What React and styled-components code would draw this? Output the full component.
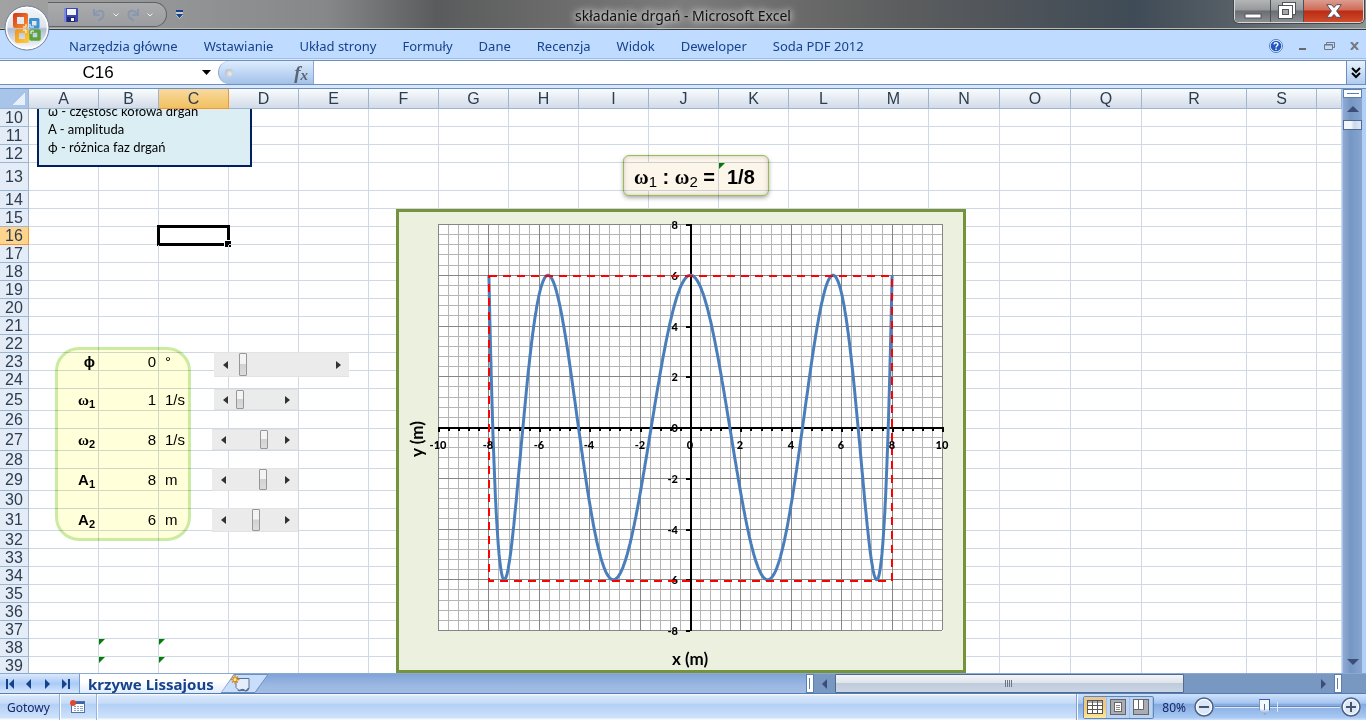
import React, { useState } from 'react';
import styled, { createGlobalStyle } from 'styled-components';

//STYLE
const GlobalStyle = createGlobalStyle`
  * { box-sizing: border-box; }
  body { margin: 0; overflow: hidden; }
  button { padding: 0; border: 0; background: none; font: inherit; color: inherit; display: flex; align-items: center; justify-content: center; }
  input { padding: 0; border: 0; outline: 0; min-width: 0; }
  svg { display: block; }
`;

const ui = `"Noto Sans", "Open Sans", sans-serif`;
const sheetFont = `"Liberation Sans", Arial, sans-serif`;
const chartFont = `Lato, "Noto Sans", sans-serif`;

const Window = styled.div`height: 100vh; display: flex; flex-direction: column; position: relative; background: #bfdbff; font-family: ${ui}; font-size: 12px;`;

const TitleBar = styled.header`
  flex: none; height: 30px; display: grid; grid-template-columns: 1fr auto 1fr; align-items: start;
  border-bottom: 1px solid #33383c; box-shadow: inset 0 -1px #b9bcb9;
  background: linear-gradient(90deg, #a2a2a2 0, #929394 14%, #858789 24%, #5a5b5c 32%, #6a6a6a 40%, #7b7b7b 50%, #6b6b6b 58%, #5c5d5e 66%, #4b5259 76%, #3f4b56 83%, #565f66 90%, #8d9494 100%);
`;
const Title = styled.h1`margin: 0; font-size: 14px; font-weight: 400; line-height: 32px; color: #111; text-shadow: 0 0 6px #ddd, 0 0 8px #ccc, 0 0 10px #ccc;`;
const QuickAccess = styled.div`
  display: flex; align-items: center; gap: 9px; margin-left: 48px; padding-top: 2px;
`;
const QuickGroup = styled.div`
  display: flex; align-items: center; width: 119px; height: 25px; padding-left: 16px; gap: 7px;
  border: 1px solid #5f6163; border-left: 0; border-radius: 0 13px 13px 0; background: linear-gradient(#a9abad, #9b9da0);
`;
const WindowButtons = styled.div`
  justify-self: end; display: flex; height: 23px; margin-right: 2px; overflow: hidden;
  border: 1px solid #d5d7d8; border-top: 0; border-radius: 0 0 5px 5px; box-shadow: 0 0 0 1px #44484c;
`;
const WindowButton = styled.button`
  width: ${p => p.$width}px; height: 22px; border-right: 1px solid #4c5054;
  background: ${p => p.$close ? 'linear-gradient(#dc9c8e 0, #cf6c58 45%, #bb2c12 50%, #cf4c2c 100%)' : 'linear-gradient(#b3b5b7 0, #96999b 45%, #6a6e72 50%, #8a8e90 100%)'};
  &:last-child { border-right: 0; }
`;
const OfficeButton = styled.button`position: absolute; left: 4px; top: 4px; z-index: 2;`;

const Ribbon = styled.nav`
  flex: none; height: 31px; display: flex; align-items: center; padding: 2px 7px 0 56px;
  border-bottom: 1px solid #6a8fc0; box-shadow: inset 0 -1px #dbe9fb, inset 0 -2px #9dbfe8;
`;
const RibbonTab = styled.a`padding: 0 13px; font-size: 13px; line-height: 26px; color: #15428b; text-decoration: none; white-space: nowrap;`;
const RibbonTools = styled.div`margin-left: auto; display: flex; align-items: center; gap: 15px;`;

const FormulaBar = styled.div`
  flex: none; height: 28px; display: flex; background: #fff; border-bottom: 1px solid #6a8fc0;
  box-shadow: inset 0 -3px #d9e7fa, inset 0 -4px #6a8fc0; padding-bottom: 4px;
`;
const NameBox = styled.input`width: 196px; text-align: center; font-family: ${sheetFont}; font-size: 17px; background: none;`;
const NameArrow = styled.button`width: 20px;`;
const FunctionButton = styled.button`
  width: 96px; margin-left: 2px; padding: 0 5px 0 6px; justify-content: space-between; border: 1px solid #8aa8cf;
  border-width: 0 1px 0 1px; border-radius: 12px 0 0 12px; background: linear-gradient(#dfecfb, #b9d3f3 60%, #a3c0e6);
  font-family: "Liberation Serif", serif; font-style: italic; font-size: 19px; line-height: 20px; font-weight: 700; color: #5b6470;
  sub { font-size: 15px; line-height: 0; vertical-align: -1px; }
`;
const Dot = styled.i`width: 8px; height: 8px; border-radius: 50%; background: radial-gradient(circle at 60% 60%, #eee, #a5adb8);`;
const FormulaInput = styled.input`flex: 1; font-family: ${sheetFont}; font-size: 15px; background: none;`;
const ExpandButton = styled.button`width: 20px; border: 1px solid #6a8fc0; border-width: 0 1px; background: linear-gradient(#e8f1fc, #aecbf0);`;

const Workspace = styled.main`flex: 1; min-height: 0; display: flex;`;
const Sheet = styled.div`flex: 1; min-width: 0; position: relative; overflow: hidden; background: #fff;`;
const Grid = styled.table`
  width: 100%; table-layout: fixed; border-collapse: separate; border-spacing: 0;
  font-family: ${sheetFont}; font-size: 15px; line-height: 16px; color: #000;
`;
const ColumnHead = styled.th`
  height: 20px; padding: 0; font-weight: 400; font-size: 16px; color: #2b3d4f;
  border-right: 1px solid ${p => p.$active ? '#f29536' : '#9eb6ce'}; border-bottom: 1px solid ${p => p.$active ? '#f29536' : '#9eb6ce'};
  background: ${p => p.$active ? 'linear-gradient(#f9d99f, #f1c15f)' : 'linear-gradient(#f9fcfd, #d3dbe9)'};
`;
const Corner = styled.th`
  padding: 0; border-right: 1px solid #9eb6ce; border-bottom: 1px solid #9eb6ce;
  background: linear-gradient(135deg, transparent 50%, #e8eff9 50%) 12px 4px / 13px 12px no-repeat, #a9c4e9;
`;
const RowHead = styled.th`
  padding: 0; font-weight: 400; font-size: 16px; color: #2b3d4f; text-align: center;
  border-right: 1px solid ${p => p.$active ? '#f29536' : '#9eb6ce'}; border-bottom: 1px solid ${p => p.$active ? '#f29536' : '#9eb6ce'};
  background: ${p => p.$active ? '#ffd58d' : '#e4ecf7'};
`;
const Cell = styled.td`
  position: relative; height: ${p => p.$height}px; padding: 0 ${p => p.$end || 0}px 0 ${p => p.$start || 0}px; white-space: nowrap;
  border-right: 1px solid #d0d7e5; border-bottom: 1px solid #d0d7e5;
  text-align: ${p => p.$align || 'left'}; font-weight: ${p => p.$bold ? 700 : 400}; font-size: ${p => p.$big ? 20 : 15}px;
  sub { font-size: ${p => p.$big ? 15 : 11}px; line-height: 0; vertical-align: -3px; font-weight: ${p => p.$big ? 400 : 700}; }
`;
const Flag = styled.i`position: absolute; left: 0; top: 0; border: solid transparent; border-width: 0 6px 6px 0; border-left: 0; border-top: 6px solid #008000; border-bottom: 0;`;
const Selection = styled.i`
  position: absolute; inset: -2px; border: 3px solid #000;
  &::after { content: ''; position: absolute; right: -4px; bottom: -4px; width: 6px; height: 6px; background: #000; border: solid #fff; border-width: 1px 0 0 1px; }
`;
const Omega = styled.span`font-family: "Liberation Serif", serif; font-size: ${p => p.$size}px; line-height: 0;`;

// floating objects lie over the cells but never over the column heads
const Objects = styled.div`position: absolute; inset: 20px 0 0 0; overflow: hidden; pointer-events: none; & > * { pointer-events: auto; }`;
const Note = styled.div`
  position: absolute; left: 37px; top: -31px; width: 215px; height: 89px; padding: 22px 9px 0;
  border: 2px solid #002060; background: #dbeef3; font-family: ${chartFont}; font-size: 13px; line-height: 18px;
  p { margin: 0; }
`;
const RatioFrame = styled.div`
  position: absolute; left: 623px; top: 46px; width: 146px; height: 41px; border: 1px solid #9bbb59; border-radius: 6px;
  background: #fbf5ea; mix-blend-mode: multiply; box-shadow: 0 2px 4px #aaa, inset 0 0 4px #cfc8bd;
`;
const ParamFrame = styled.div`
  position: absolute; left: 55px; top: 238px; width: 136px; height: 194px; border: 3px solid #cbeaa2; border-radius: 24px;
  background: #ffffd9; mix-blend-mode: multiply;
`;
const Spinner = styled.div`
  position: absolute; left: ${p => p.$left}px; top: ${p => p.$top}px; width: ${p => p.$width}px; height: ${p => p.$height}px;
  display: flex; background: #ebebeb; border: 1px solid #e3e3e3; border-width: 1px 0;
  button { width: 22px; }
  input {
    flex: 1; appearance: none; background: none; margin: 0; height: 100%;
    &::-webkit-slider-thumb { appearance: none; width: 8px; height: ${p => p.$height - 2}px; border: 1px solid #979797; border-radius: 1px; background: linear-gradient(#f4f4f4 45%, #d2d2d6 50%, #dcdcde); }
  }
`;
const ChartFrame = styled.figure`position: absolute; left: 396px; top: 100px; margin: 0; border: 3px solid #76933c; background: #ebf0df;`;

const VScroll = styled.div`
  flex: none; width: 24px; display: flex; flex-direction: column; align-items: center; justify-content: space-between;
  border-left: 1px solid #a9c6ec; border-right: 4px solid #b1cef5; background: linear-gradient(90deg, #8fabd3, #7697c4 40%, #86a5d0);
  padding-bottom: 8px;
`;
const VTop = styled.div`width: 100%; display: flex; flex-direction: column; align-items: center; gap: 8px;`;
const VSplit = styled.div`width: 100%; height: 9px; border: 1px solid #5c7fae; background: linear-gradient(#5c7fae, #5c7fae) 3px 3px / 12px 1px no-repeat, #fff;`;
const VThumb = styled.div`width: 100%; height: 10px; border: 1px solid #4f6a93; background: linear-gradient(90deg, #f2f6fb 40%, #c9d8ec 60%, #dfe9f6);`;

const TabStrip = styled.div`
  flex: none; height: 20px; display: flex; border-top: 1px solid #8aa9d3; background: linear-gradient(#7fa3d8, #9cb8e2 60%, #a2bce3);
`;
const TabNav = styled.div`display: flex; width: 79px; padding: 0 4px 0 1px; background: linear-gradient(#dbe8fa, #a9cbf7 50%, #d7e6fb); button { flex: 1; }`;
const SheetTab = styled.a`
  position: relative; padding: 0 20px 0 8px; background: linear-gradient(#fff 40%, #dfecff); border-left: 1px solid #7c9cc8;
  clip-path: polygon(0 0, 100% 0, calc(100% - 13px) 100%, 0 100%);
  font-size: 15px; font-weight: 700; line-height: 20px; color: #15428b; text-decoration: none;
`;
const NewSheet = styled.button`margin-left: -13px;`;
const HSide = styled.div`margin-left: auto; width: 41%; display: flex; align-items: stretch; background: #7898c2; padding-right: 24px;`;
const HSplit = styled.div`width: 8px; border: 1px solid #5c7fae; background: linear-gradient(#5c7fae, #5c7fae) 2px 3px / 1px 11px no-repeat, #fff;`;
const HArrow = styled.button`width: 21px;`;
const HTrack = styled.div`flex: 1; display: flex;`;
const HThumb = styled.div`
  width: 73%; display: flex; align-items: center; justify-content: center; border: 1px solid #4f6a93; border-radius: 1px;
  background: linear-gradient(#f2f4f8 0, #e0e5ec 45%, #c0cbda 50%, #c9d5e6 100%);
`;

const StatusBar = styled.footer`
  flex: none; height: 27px; display: flex; align-items: stretch; border-top: 1px solid #567db1; color: #15286b; line-height: 27px;
  background: linear-gradient(#fff 0, #d7e6f9 8%, #c7dcf8 35%, #b3d0f5 40%, #cde1fb 90%, #fff 100%);
`;
const StatusText = styled.span`padding: 0 9px 0 7px; font-size: 12px;`;
const StatusIcon = styled.button`width: 38px; border: 1px solid #95b5e0; border-width: 0 1px; box-shadow: 1px 0 #fff, inset 1px 0 #fff;`;
const StatusRight = styled.div`
  margin-left: auto; display: flex; align-items: center; gap: 8px; padding: 0 5px 0 6px; border-left: 1px solid #7ea2d3; box-shadow: inset 1px 0 #fff;
  background: linear-gradient(#cfe2fb 0, #a5c6f2 35%, #86abe0 40%, #a6c8f3 90%, #cfe2fb 100%);
`;
const ViewButtons = styled.div`display: flex; height: 23px; border: 1px solid #5f87b8; border-radius: 2px;`;
const ViewButton = styled.button`width: 23px; background: ${p => p.$active ? 'linear-gradient(#e8c79a, #f3c878 50%, #ffe89a)' : '#bcd4f4'}; border-right: 1px solid #a3c0e6;`;
const ZoomSlider = styled.div`
  display: flex; align-items: center;
  input {
    width: 125px; height: 16px; margin: 0 1px; appearance: none;
    background: linear-gradient(#dde9f8, #dde9f8) 62px 3px / 1px 10px no-repeat, linear-gradient(#dde9f8, #dde9f8) 0 8px / 100% 1px no-repeat, linear-gradient(#6788b8, #6788b8) 0 7px / 100% 1px no-repeat;
    &::-webkit-slider-thumb {
      appearance: none; width: 11px; height: 16px; clip-path: polygon(0 0, 100% 0, 100% 65%, 50% 100%, 0 65%);
      background: linear-gradient(#4a6fa5, #4a6fa5) 5px 5px / 1px 6px no-repeat, linear-gradient(90deg, #38609b 1px, transparent 1px calc(100% - 1px), #38609b calc(100% - 1px)), linear-gradient(#38609b 1px, #f5f9ff 1px 60%, #7593c0);
    }
  }
`;

const columns = [
  ['A', 70], ['B', 60], ['C', 70], ['D', 70], ['E', 70], ['F', 70], ['G', 70], ['H', 70], ['I', 70], ['J', 70],
  ['K', 70], ['L', 70], ['M', 70], ['N', 71], ['O', 71], ['Q', 71], ['R', 105], ['S', 70], ['', null],
];
const heights = { 13: 28, 25: 22, 27: 22, 29: 22, 31: 22 };
const rows = Array.from({ length: 30 }, (_, i) => i + 10);

const param = (label, value, unit) => ({
  A: { text: label, align: 'right', bold: true, end: 3 },
  B: { text: value, align: 'right', end: 2 },
  C: { text: unit, start: 6 },
});
const omega = (n) => <><Omega $size={15}>ω</Omega><sub>{n}</sub></>;

const cells = {
  13: {
    I: { text: <><Omega $size={20}>ω</Omega><sub>1</sub> : <Omega $size={20}>ω</Omega><sub>2</sub> =</>, span: 2, align: 'right', bold: true, big: true, end: 3 },
    K: { text: '1/8', bold: true, big: true, start: 8, flag: true },
  },
  16: { C: { selected: true } },
  23: param('ϕ', '0', '°'),
  25: param(omega(1), '1', '1/s'),
  27: param(omega(2), '8', '1/s'),
  29: param(<>A<sub>1</sub></>, '8', 'm'),
  31: param(<>A<sub>2</sub></>, '6', 'm'),
  38: { B: { flag: true }, C: { flag: true } },
  39: { B: { flag: true }, C: { flag: true } },
};

const spinners = [
  { name: 'Różnica faz', left: 214, top: 243, width: 135, height: 25, max: 83, value: 3 },
  { name: 'Częstość 1', left: 214, top: 280, width: 84, height: 21, max: 32, value: 0 },
  { name: 'Częstość 2', left: 212, top: 320, width: 86, height: 21, max: 34, value: 26 },
  { name: 'Amplituda 1', left: 212, top: 359, width: 86, height: 23, max: 34, value: 25 },
  { name: 'Amplituda 2', left: 212, top: 399, width: 86, height: 24, max: 34, value: 18 },
];

const ribbonTabs = ['Narzędzia główne', 'Wstawianie', 'Układ strony', 'Formuły', 'Dane', 'Recenzja', 'Widok', 'Deweloper', 'Soda PDF 2012'];

const arrowPaths = {
  left: ['0 5 5 0 5 10', 5, 10],
  right: ['5 5 0 0 0 10', 5, 10],
  smallLeft: ['0 4 5 0 5 8', 5, 8],
  smallRight: ['5 4 0 0 0 8', 5, 8],
  up: ['6 0 12 6 0 6', 12, 6],
  down: ['6 6 12 0 0 0', 12, 6],
};

function Arrow({ dir, color = '#333', bar }) {
  const [points, w, h] = arrowPaths[dir];
  return (
    <svg width={bar ? w + 3 : w} height={h} viewBox={`${bar === 'before' ? -3 : 0} 0 ${bar ? w + 3 : w} ${h}`}>
      <polygon points={points} fill={color} />
      {bar && <rect x={bar === 'before' ? -3 : 6} width="2" height="10" fill={color} />}
    </svg>
  )
}

function OfficeLogo() {
  return (
    <svg width="47" height="47" viewBox="0 0 47 47">
      <defs>
        <linearGradient id="orb" x1="0" y1="0" x2="0" y2="1">
          <stop offset="0" stopColor="#f7f8fa" /><stop offset=".48" stopColor="#dde2ea" /><stop offset=".52" stopColor="#aebdd4" /><stop offset="1" stopColor="#fff" />
        </linearGradient>
        <linearGradient id="red" x1="0" y1="0" x2="1" y2="1"><stop offset="0" stopColor="#d8401c" /><stop offset="1" stopColor="#f58a2c" /></linearGradient>
        <linearGradient id="yellow" x1="0" y1="0" x2="1" y2="1"><stop offset="0" stopColor="#f39a1c" /><stop offset="1" stopColor="#fcc733" /></linearGradient>
      </defs>
      <circle cx="23" cy="24" r="22" fill="url(#orb)" stroke="#6c7f9b" />
      <circle cx="23" cy="24" r="20.500" fill="none" stroke="#fff" strokeWidth="1.500" />
      <g fill="none" strokeLinejoin="round">
        <rect x="11" y="11" width="11" height="11" stroke="url(#red)" strokeWidth="4" />
        <rect x="26.500" y="15.500" width="7.500" height="7.500" stroke="#3f92cf" strokeWidth="3" />
        <rect x="13" y="27" width="10" height="10" stroke="url(#yellow)" strokeWidth="4" />
        <rect x="27" y="27" width="8" height="8" stroke="#5aa33b" strokeWidth="3.500" />
        <path d="M22 20v3h-3M26 20v3h4M22 29v-3h-3M27 30v-3h3" stroke="#fff" />
      </g>
    </svg>
  )
}

const Curl = ({ flip }) => (
  <svg width="14" height="14" viewBox="0 0 14 14" transform={flip ? 'scale(-1 1)' : undefined}>
    <path d="M2 1v6h6M2.500 6.500C5 2 11 1.500 11.500 6c.3 3-2 5-5 6.500" fill="none" stroke="#8494b0" strokeWidth="2" opacity=".8" />
  </svg>
)
const Chevron = () => <svg width="6" height="4" viewBox="0 0 6 4"><path d="M.5.5 3 3 5.500.5" fill="none" stroke="#f0f0f0" /></svg>;

function TopBar() {
  return (
    <TitleBar>
      <QuickAccess>
        <QuickGroup>
          <button aria-label="Zapisz">
            <svg width="14" height="14" viewBox="0 0 14 14">
              <rect width="14" height="14" rx="1" fill="#3b46b5" /><rect x="3" y="1" width="9" height="6" fill="#f2f5fd" />
              <rect x="3" y="9" width="8" height="5" fill="#24286f" /><rect x="7" y="10" width="3" height="3" fill="#fff" /><rect width="2" height="14" fill="#7d88e0" />
            </svg>
          </button>
          <span />
          <button aria-label="Cofnij"><Curl /></button>
          <button aria-label="Lista cofania"><Chevron /></button>
          <button aria-label="Wykonaj ponownie"><Curl flip /></button>
          <button aria-label="Lista ponawiania"><Chevron /></button>
        </QuickGroup>
        <button aria-label="Dostosuj pasek">
          <svg width="7" height="9" viewBox="0 0 7 9"><path d="M0 1h7" stroke="#15428b" strokeWidth="2" /><path d="M0 3h7" stroke="#fff" /><path d="M0 4h7L3.500 8z" fill="#15428b" /><path d="m0 5 3.500 3.500L7 5" fill="none" stroke="#dfe6f2" strokeWidth=".6" /></svg>
        </button>
      </QuickAccess>
      <Title>składanie drgań - Microsoft Excel</Title>
      <WindowButtons>
        <WindowButton $width={36} aria-label="Minimalizuj">
          <svg width="18" height="18" viewBox="0 0 18 18"><rect x="1" y="12" width="16" height="4" fill="#fff" stroke="#50555c" /></svg>
        </WindowButton>
        <WindowButton $width={33} aria-label="Przywróć">
          <svg width="18" height="18" viewBox="0 0 18 18">
            <rect x="4.500" y=".5" width="13" height="12" fill="#fff" stroke="#50555c" />
            <rect x=".5" y="3.500" width="14" height="13" fill="#fff" stroke="#50555c" />
            <rect x="4.500" y="7.500" width="6" height="5" fill="#a5a8ab" stroke="#50555c" />
          </svg>
        </WindowButton>
        <WindowButton $width={59} $close aria-label="Zamknij">
          <svg width="16" height="14" viewBox="0 0 16 14"><path d="M.7.700h4.800L8 3.600 10.500.7h4.800L10.600 7l4.700 6.300h-4.800L8 10.400l-2.500 2.900H.7L5.400 7z" fill="#fff" stroke="#4e4f60" /></svg>
        </WindowButton>
      </WindowButtons>
    </TitleBar>
  )
}

function RibbonBar() {
  return (
    <Ribbon>
      {ribbonTabs.map(tab => <RibbonTab href="#" key={tab}>{tab}</RibbonTab>)}
      <RibbonTools>
        <button aria-label="Pomoc">
          <svg width="14" height="14" viewBox="0 0 14 14">
            <circle cx="7" cy="7" r="6.500" fill="#fff" stroke="#4a7cc8" /><circle cx="7" cy="7" r="5.300" fill="#1f57c3" />
            <path d="M5 5.500C5.200 3.200 9 3.300 8.900 5.400 8.800 6.700 7 6.800 7 8.500M7 9.500v1.500" fill="none" stroke="#fff" strokeWidth="1.400" />
          </svg>
        </button>
        <button aria-label="Minimalizuj skoroszyt"><svg width="11" height="10" viewBox="0 0 11 10"><path d="M1 8h7" stroke="#66696e" strokeWidth="2" /></svg></button>
        <button aria-label="Przywróć skoroszyt">
          <svg width="11" height="8" viewBox="0 0 11 8"><path d="M2.500 2.500v-2h8v5h-2M.5 2.500h8v5h-8zM.5 3h8" fill="none" stroke="#75797f" /></svg>
        </button>
        <button aria-label="Zamknij skoroszyt"><svg width="9" height="8" viewBox="0 0 9 8"><path d="m1 0 7 8M8 0 1 8" stroke="#75797f" strokeWidth="2" /></svg></button>
      </RibbonTools>
    </Ribbon>
  )
}

function FormulaRow() {
  const [formula, setFormula] = useState('');
  return (
    <FormulaBar>
      <NameBox aria-label="Pole nazwy" defaultValue="C16" />
      <NameArrow aria-label="Lista nazw"><svg width="9" height="5" viewBox="0 0 9 5"><path d="M0 0h9L4.500 5z" fill="#000" /></svg></NameArrow>
      <FunctionButton aria-label="Wstaw funkcję"><Dot /><span>f<sub>x</sub></span></FunctionButton>
      <FormulaInput aria-label="Pasek formuły" value={formula} onChange={e => setFormula(e.target.value)} />
      <ExpandButton aria-label="Rozwiń pasek formuły">
        <svg width="10" height="12" viewBox="0 0 10 12"><path d="m1 1 4 4 4-4M1 6l4 4 4-4" fill="none" stroke="#000" strokeWidth="2" /></svg>
      </ExpandButton>
    </FormulaBar>
  )
}

function SheetRow({ row }) {
  const data = cells[row] || {};
  const height = heights[row] || 18;
  const visible = columns.filter(([name], i) => !(i > 0 && data[columns[i - 1][0]]?.span));
  return (
    <tr>
      <RowHead scope="row" $active={row === 16}>{row}</RowHead>
      {visible.map(([name]) => {
        const c = data[name] || {};
        return (
          <Cell key={name} $height={height} colSpan={c.span} $align={c.align} $bold={c.bold} $big={c.big} $start={c.start} $end={c.end}>
            {c.text}
            {c.flag && <Flag />}
            {c.selected && <Selection />}
          </Cell>
        )
      })}
    </tr>
  )
}

// plot area inside the chart frame
const plot = { x: 39, y: 12, w: 504, h: 406 };
const px = x => plot.x + (x + 10) * plot.w / 20;
const py = y => plot.y + (8 - y) * plot.h / 16;
const snap = v => Math.round(v) + 0.5;
const range = (from, to, step) => Array.from({ length: Math.round((to - from) / step) + 1 }, (_, i) => from + i * step);

const curve = range(0, 720, 1).map(i => {
  const t = Math.PI * i / 720;
  return `${(px(8 * Math.cos(t)) + 0.5).toFixed(1)},${(py(6 * Math.cos(8 * t)) + 0.5).toFixed(1)}`;
}).join(' ');

function Chart() {
  const minor = { stroke: '#b5b5b5' };
  const major = { stroke: '#868686' };
  return (
    <ChartFrame>
      <svg width="564" height="458" viewBox="0 0 564 458" fontFamily={chartFont} fontWeight="900" fontSize="11" role="img" aria-label="krzywa Lissajous">
        <rect x={plot.x} y={plot.y} width={plot.w + 1} height={plot.h + 1} fill="#fff" />
        <g {...minor}>
          {range(-10, 10, 0.4).map(x => <line key={x} x1={snap(px(x))} x2={snap(px(x))} y1={plot.y} y2={plot.y + plot.h} />)}
          {range(-8, 8, 0.4).map(y => <line key={y} y1={snap(py(y))} y2={snap(py(y))} x1={plot.x} x2={plot.x + plot.w} />)}
        </g>
        <g {...major}>
          {range(-10, 10, 2).map(x => <line key={x} x1={snap(px(x))} x2={snap(px(x))} y1={plot.y} y2={plot.y + plot.h} />)}
          {range(-8, 8, 2).map(y => <line key={y} y1={snap(py(y))} y2={snap(py(y))} x1={plot.x} x2={plot.x + plot.w} />)}
        </g>
        <g stroke="#000" strokeWidth="2">
          <line x1={px(0) + 1} x2={px(0) + 1} y1={plot.y} y2={plot.y + plot.h + 1} />
          <line y1={py(0) + 1} y2={py(0) + 1} x1={plot.x} x2={plot.x + plot.w + 1} />
          {range(-10, 10, 0.4).map(x => <line key={x} x1={Math.round(px(x)) + 1} x2={Math.round(px(x)) + 1} y1={py(0)} y2={py(0) + 4} />)}
          {range(-10, 10, 2).map(x => <line key={x} x1={Math.round(px(x)) + 1} x2={Math.round(px(x)) + 1} y1={py(0)} y2={py(0) + 5} />)}
          {range(-8, 8, 2).map(y => <line key={y} y1={Math.round(py(y)) + 1} y2={Math.round(py(y)) + 1} x1={px(0) - 4} x2={px(0)} />)}
        </g>
        <g textAnchor="end">
          {range(-8, 8, 2).map(y => <text key={y} x={px(0) - 12} y={Math.round(py(y)) + 5}>{y}</text>)}
        </g>
        <polyline points={curve} fill="none" stroke="#4a7ebb" strokeWidth="3" strokeLinejoin="round" />
        <rect x={Math.round(px(-8)) + 1} y={Math.round(py(6)) + 1} width={Math.round(px(8) - px(-8))} height={Math.round(py(-6) - py(6))} fill="none" stroke="#f00" strokeWidth="2" strokeDasharray="8 6" />
        <g textAnchor="middle">
          {range(-10, 10, 2).map(x => <text key={x} x={Math.round(px(x))} y={py(0) + 22}>{x}</text>)}
        </g>
        <g textAnchor="middle" fontSize="17" fontWeight="700">
          <text x={px(0)} y="453">x (m)</text>
          <text transform="translate(24 227) rotate(-90)">y (m)</text>
        </g>
      </svg>
    </ChartFrame>
  )
}

function Spreadsheet() {
  return (
    <Sheet>
      <Grid>
        <colgroup>
          <col style={{ width: 29 }} />
          {columns.map(([name, width]) => <col key={name} style={width ? { width } : undefined} />)}
        </colgroup>
        <thead>
          <tr>
            <Corner />
            {columns.map(([name]) => <ColumnHead scope="col" key={name} $active={name === 'C'}>{name}</ColumnHead>)}
          </tr>
        </thead>
        <tbody>
          {rows.map(row => <SheetRow row={row} key={row} />)}
        </tbody>
      </Grid>
      <Objects>
        <Note>
          <p>ω - częstość kołowa drgań</p>
          <p>A - amplituda</p>
          <p>ϕ - różnica faz drgań</p>
        </Note>
        <RatioFrame />
        <ParamFrame />
        {spinners.map(s => (
          <Spinner key={s.name} $left={s.left} $top={s.top} $width={s.width} $height={s.height}>
            <button aria-label="Mniej"><Arrow dir="smallLeft" /></button>
            <input type="range" aria-label={s.name} min="0" max={s.max} defaultValue={s.value} />
            <button aria-label="Więcej"><Arrow dir="smallRight" /></button>
          </Spinner>
        ))}
        <Chart />
      </Objects>
    </Sheet>
  )
}

function BottomTabs() {
  return (
    <TabStrip>
      <TabNav>
        <button aria-label="Pierwszy arkusz"><Arrow dir="left" color="#15428b" bar="before" /></button>
        <button aria-label="Poprzedni arkusz"><Arrow dir="left" color="#15428b" /></button>
        <button aria-label="Następny arkusz"><Arrow dir="right" color="#15428b" /></button>
        <button aria-label="Ostatni arkusz"><Arrow dir="right" color="#15428b" bar="after" /></button>
      </TabNav>
      <SheetTab href="#">krzywe Lissajous</SheetTab>
      <NewSheet aria-label="Wstaw arkusz">
        <svg width="48" height="19" viewBox="0 0 48 19">
          <path d="M0 18.500 13 .5h34L34 18.500z" fill="#c9defa" stroke="#6a8fc0" />
          <path d="M15 4.500h13v9l-3 3h-7l-3-3z" fill="#e4edfa" stroke="#5a6f96" />
          <path d="M17 16c2 2 4-2 6 0s4 0 5-2" fill="none" stroke="#5a6f96" strokeWidth="1.500" />
          <path d="M14 1v9M9.500 5.500h9M11 2.500l6 6M17 2.500l-6 6" stroke="#d98a1c" strokeWidth="1.300" /><circle cx="14" cy="5.500" r="1.500" fill="#fff3a8" />
        </svg>
      </NewSheet>
      <HSide>
        <HSplit />
        <HArrow aria-label="Przewiń w lewo"><Arrow dir="left" color="#3c4d78" /></HArrow>
        <HTrack>
          <HThumb><svg width="8" height="7" viewBox="0 0 8 7"><path d="M.5 0v7M2.500 0v7M4.500 0v7M6.500 0v7" stroke="#6b7688" /></svg></HThumb>
        </HTrack>
        <HArrow aria-label="Przewiń w prawo"><Arrow dir="right" color="#3c4d78" /></HArrow>
        <HSplit />
      </HSide>
    </TabStrip>
  )
}

const RoundSign = ({ plus }) => (
  <svg width="20" height="20" viewBox="0 0 20 20">
    <circle cx="10" cy="10" r="9" fill="#dce8f8" stroke="#4f6384" strokeWidth="1.500" /><circle cx="10" cy="10" r="7.500" fill="none" stroke="#fff" />
    <path d={plus ? 'M5 10h10M10 5v10' : 'M5 10h10'} stroke="#46546c" strokeWidth="2" />
  </svg>
)

function Status() {
  return (
    <StatusBar>
      <StatusText>Gotowy</StatusText>
      <StatusIcon aria-label="Zarejestruj makro">
        <svg width="16" height="14" viewBox="0 0 16 14">
          <rect x="1.500" y="1.500" width="13" height="11" fill="#fff" stroke="#53709c" /><rect x="2" y="2" width="12" height="2" fill="#3f62a8" />
          <path d="M4 6.500h2M7 6.500h2M10 6.500h3M4 8.500h2M7 8.500h2M10 8.500h3M4 10.500h2M7 10.500h2M10 10.500h3" stroke="#8ba3c8" />
          <circle cx="3" cy="3" r="3" fill="#e2492c" />
        </svg>
      </StatusIcon>
      <StatusRight>
        <ViewButtons>
          <ViewButton $active aria-label="Normalny">
            <svg width="16" height="14" viewBox="0 0 16 14"><rect x=".5" y=".5" width="15" height="13" fill="#fff" stroke="#555" /><path d="M0 2h16M0 5.500h16M0 9.500h16M5.500 1v13M10.500 1v13" stroke="#555" /></svg>
          </ViewButton>
          <ViewButton aria-label="Układ strony">
            <svg width="16" height="16" viewBox="0 0 16 16"><rect x=".5" y=".5" width="15" height="15" fill="#a9adb3" stroke="#666" /><rect x="4.500" y="3.500" width="7" height="9" fill="#fff" stroke="#666" /><path d="M6 6.500h4M6 8.500h4M6 10.500h4" stroke="#888" /></svg>
          </ViewButton>
          <ViewButton aria-label="Podgląd podziału stron">
            <svg width="16" height="16" viewBox="0 0 16 16"><rect x=".5" y=".5" width="15" height="15" fill="#a9adb3" stroke="#666" /><path d="M1 1h4v9H1zM6 1h4v9H6z" fill="#fff" /><path d="M5.500 0v10M10.500 0v10.500H0" fill="none" stroke="#666" /></svg>
          </ViewButton>
        </ViewButtons>
        <span>80%</span>
        <ZoomSlider>
          <button aria-label="Pomniejsz"><RoundSign /></button>
          <input type="range" aria-label="Powiększenie" min="0" max="100" defaultValue="39" />
          <button aria-label="Powiększ"><RoundSign plus /></button>
        </ZoomSlider>
      </StatusRight>
    </StatusBar>
  )
}

export default function App() {
  return (
    <Window>
      <GlobalStyle />
      <OfficeButton aria-label="Przycisk pakietu Office"><OfficeLogo /></OfficeButton>
      <TopBar />
      <RibbonBar />
      <FormulaRow />
      <Workspace>
        <Spreadsheet />
        <VScroll>
          <VTop>
            <VSplit />
            <button aria-label="Przewiń w górę"><Arrow dir="up" color="#3c4d78" /></button>
            <VThumb />
          </VTop>
          <button aria-label="Przewiń w dół"><Arrow dir="down" color="#3c4d78" /></button>
        </VScroll>
      </Workspace>
      <BottomTabs />
      <Status />
    </Window>
  )
}
